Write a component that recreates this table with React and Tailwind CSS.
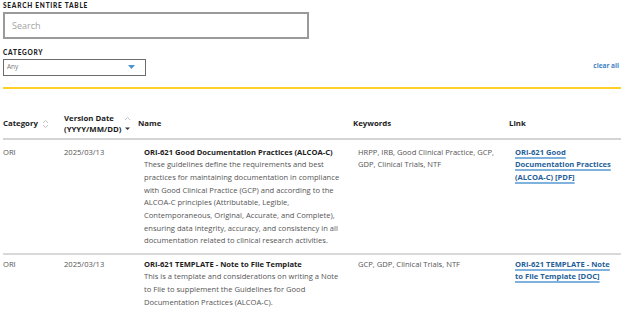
const rows = [
  {
    category: 'ORI',
    date: '2025/03/13',
    title: 'ORI-621 Good Documentation Practices (ALCOA-C)',
    body:
      'These guidelines define the requirements and best practices for maintaining documentation in compliance with Good Clinical Practice (GCP) and according to the ALCOA-C principles (Attributable, Legible, Contemporaneous, Original, Accurate, and Complete), ensuring data integrity, accuracy, and consistency in all documentation related to clinical research activities.',
    keywords: 'HRPP, IRB, Good Clinical Practice, GCP, GDP, Clinical Trials, NTF',
    link: 'ORI-621 Good Documentation Practices (ALCOA-C) [PDF]',
  },
  {
    category: 'ORI',
    date: '2025/03/13',
    title: 'ORI-621 TEMPLATE - Note to File Template',
    body:
      'This is a template and considerations on writing a Note to File to supplement the Guidelines for Good Documentation Practices (ALCOA-C).',
    keywords: 'GCP, GDP, Clinical Trials, NTF',
    link: 'ORI-621 TEMPLATE - Note to File Template [DOC]',
  },
]

function SortBoth() {
  return (
    <svg width="7" height="10" viewBox="0 0 7 10" className="ml-1 shrink-0">
      <path d="M1 4 L3.5 1.5 L6 4" fill="none" stroke="#b5b5b5" strokeWidth="0.8" />
      <path d="M1 6 L3.5 8.5 L6 6" fill="none" stroke="#b5b5b5" strokeWidth="0.8" />
    </svg>
  )
}

function SortDesc() {
  return (
    <svg width="7" height="18" viewBox="0 0 7 18" className="ml-[3px] shrink-0">
      <path d="M1 5 L3.5 2.5 L6 5" fill="none" stroke="#b5b5b5" strokeWidth="0.8" />
      <path d="M1 12.5 L6 12.5 L3.5 15 Z" fill="#333" />
    </svg>
  )
}

export default function App() {
  const label = "text-[6.5px] font-black tracking-[0.12em] uppercase text-[#1a1a1a] font-['Lato',sans-serif]"
  return (
    <div className="w-[624px] h-[315px] overflow-hidden bg-white font-['Open_Sans',sans-serif] text-[#555]">
      <div className="px-[3px] pt-[1px]">
        <div className={label}>Search entire table</div>
        <div className="mt-[1px] w-[306px] h-[27px] border-2 border-[#9a9a9a] flex items-center pl-[7px]">
          <span className="text-[9px] text-[#a3a3a3]">Search</span>
        </div>

        <div className={`${label} mt-[9px]`}>Category</div>
        <div className="flex items-end justify-between">
          <div className="mt-[1px] w-[143px] h-[17px] border border-[#6b6b6b] flex items-center justify-between pl-[3px] pr-[10px]">
            <span className="text-[6.5px] text-[#777]">Any</span>
            <svg width="7" height="4" viewBox="0 0 7 4">
              <path d="M0 0 L7 0 L3.5 4 Z" fill="#4b93d1" />
            </svg>
          </div>
          <span className="text-[6.5px] font-bold text-[#3f83c4] mb-[5px] mr-[2px]">clear all</span>
        </div>

        <div className="mt-[11px] h-[2px] bg-[#ffd027]" />

        {/* header */}
        <div className="grid grid-cols-[61px_74px_215px_156px_1fr] h-[51px] items-end pb-[2px] text-[7.8px] font-bold text-[#1c1c1c] border-b-2 border-[#d4d4d4]">
          <div className="flex items-center h-[24px]">
            Category
            <SortBoth />
          </div>
          <div className="flex items-center h-[24px]">
            <div className="leading-[11px]">
              Version Date
              <br />
              (YYYY/MM/DD)
            </div>
            <SortDesc />
          </div>
          <div className="flex items-center h-[24px]">Name</div>
          <div className="flex items-center h-[24px]">Keywords</div>
          <div className="flex items-center h-[24px]">Link</div>
        </div>

        {rows.map((r, i) => (
          <div
            key={i}
            className={`grid grid-cols-[61px_80px_214px_157px_1fr] text-[7.6px] leading-[12.7px] ${
              i === 0 ? 'pt-[6px] h-[115px] border-b-2 border-[#d9d9d9]' : 'pt-[3px]'
            }`}
          >
            <div>{r.category}</div>
            <div>{r.date}</div>
            <div className="pr-[12px]">
              <div className="font-bold text-[#1c1c1c]">{r.title}</div>
              <div>{r.body}</div>
            </div>
            <div className="pr-[16px]">{r.keywords}</div>
            <div className="pr-[4px]">
              <a className="font-bold text-[#1f5f99] underline decoration-[#7fb2dd] decoration-[1.5px] underline-offset-[2px]">
                {r.link}
              </a>
            </div>
          </div>
        ))}
      </div>
    </div>
  )
}
